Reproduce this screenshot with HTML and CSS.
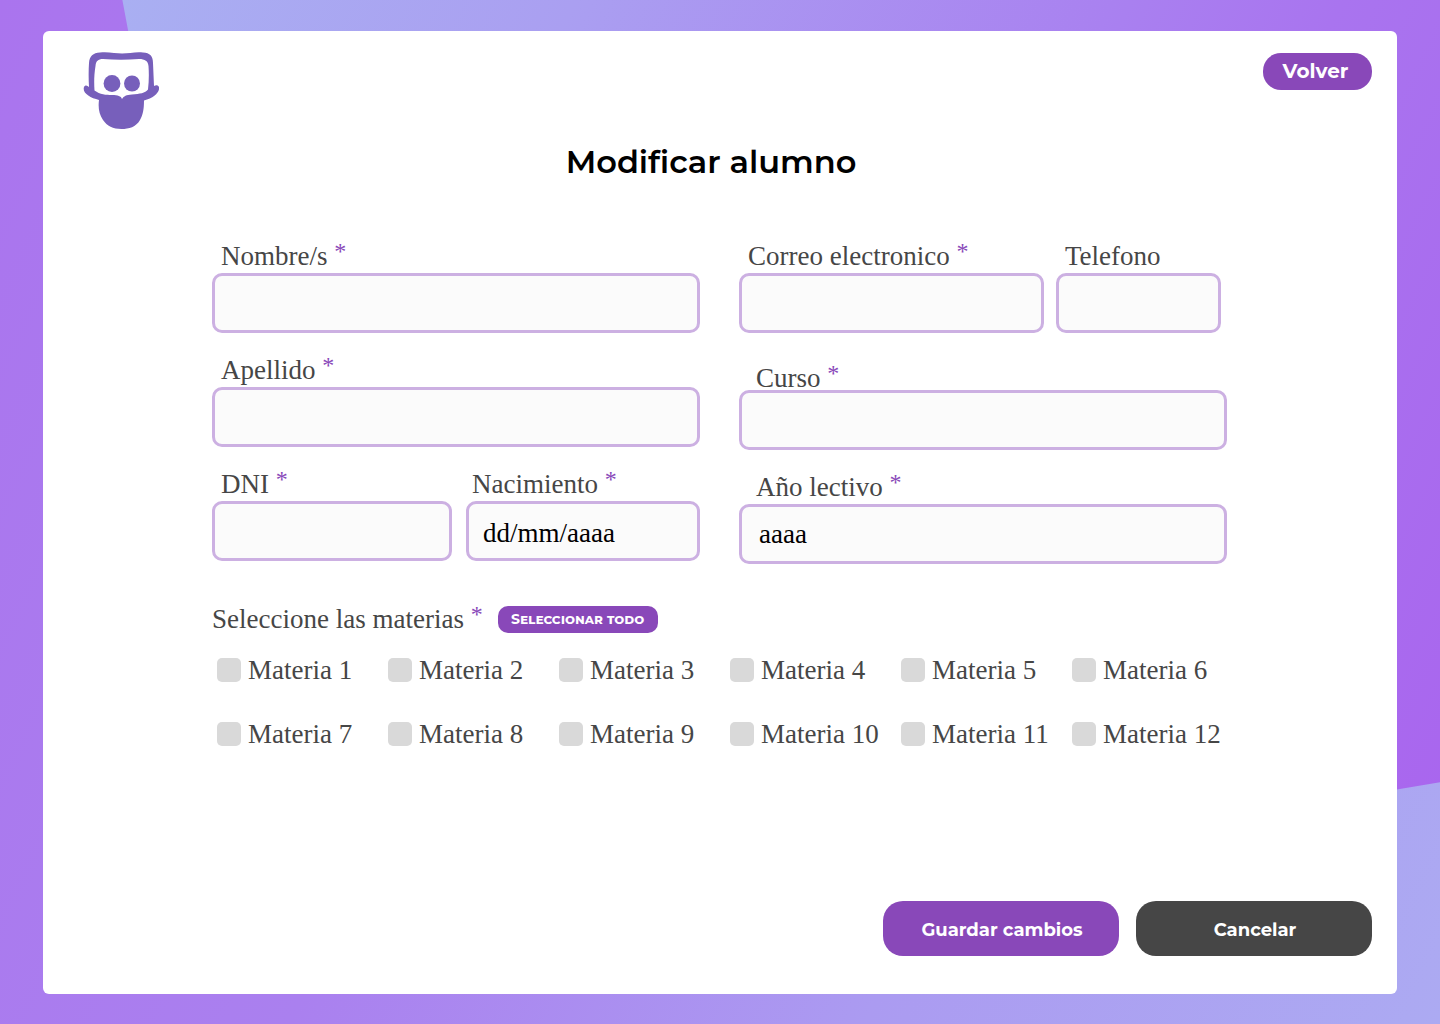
FILE: index.html
```html
<!DOCTYPE html>
<html lang="es">
<head>
<meta charset="utf-8">
<meta name="viewport" content="width=device-width, initial-scale=1">
<title>Modificar alumno</title>
<link rel="stylesheet" href="styles.css">
</head>
<body>
<main class="card">
  <header class="top">
    <svg class="logo" viewBox="0 0 76 80" aria-hidden="true">
      <path fill="#775fbb" fill-rule="evenodd" d="M17 1.500C25 .5 33 2.500 39 2.500C46 2.500 53 .5 60 1.500C67 2 70 5 70 12L71 35C73 34 75 34 76 36C77 41 71 47 61 49.500C61 58 60 64 57 69C53 76 46 78 38.500 78C30 78 24 75 20 69C16 63 15 57 16 49C7 47-1 42 1 36C2 34 4 34 6 36C5.500 28 5.500 19 6 12C6.500 5 10 2 17 1.500ZM20 8C15 8 13 10 12.500 15C11 24 11 32 11.500 39.500C17 43.500 23 44 29 44C35 44 38 45 39 48C41 45 43 44 49 43.500C57 43 62 42 65 38.500C66 30 66 22 65.500 15C65 10 62 8 56 8C44 9 32 9 20 8Z"/>
      <circle cx="29" cy="32.500" r="8.400" fill="#775fbb"/><circle cx="49" cy="32.500" r="8" fill="#775fbb"/>
    </svg>
    <button type="button" class="btn back">Volver</button>
  </header>
  <h1 class="title">Modificar alumno</h1>
  <form class="form">
    <div class="columns">
      <div class="column">
        <div class="field"><label for="nombre">Nombre/s <span class="req">*</span></label><input id="nombre" type="text"></div>
        <div class="field"><label for="apellido">Apellido <span class="req">*</span></label><input id="apellido" type="text"></div>
        <div class="pair pair-dni">
          <div class="field"><label for="dni">DNI <span class="req">*</span></label><input id="dni" type="text"></div>
          <div class="field birth"><label for="nacimiento">Nacimiento <span class="req">*</span></label><input id="nacimiento" type="text" placeholder="dd/mm/aaaa"></div>
        </div>
      </div>
      <div class="column">
        <div class="pair pair-contact">
          <div class="field"><label for="correo">Correo electronico <span class="req">*</span></label><input id="correo" type="email"></div>
          <div class="field"><label for="telefono">Telefono</label><input id="telefono" type="tel"></div>
        </div>
        <div class="field course"><label for="curso">Curso <span class="req">*</span></label><input id="curso" type="text"></div>
        <div class="field year"><label for="anio">Año lectivo <span class="req">*</span></label><input id="anio" type="text" placeholder="aaaa"></div>
      </div>
    </div>
    <div class="subjects-head"><span>Seleccione las materias <span class="req">*</span></span><button type="button" class="btn all">Seleccionar todo</button></div>
    <div class="subjects">
      <label><input type="checkbox">Materia 1</label>
      <label><input type="checkbox">Materia 2</label>
      <label><input type="checkbox">Materia 3</label>
      <label><input type="checkbox">Materia 4</label>
      <label><input type="checkbox">Materia 5</label>
      <label><input type="checkbox">Materia 6</label>
      <label><input type="checkbox">Materia 7</label>
      <label><input type="checkbox">Materia 8</label>
      <label><input type="checkbox">Materia 9</label>
      <label><input type="checkbox">Materia 10</label>
      <label><input type="checkbox">Materia 11</label>
      <label><input type="checkbox">Materia 12</label>
    </div>
    <div class="actions">
      <button type="submit" class="btn action">Guardar cambios</button>
      <button type="button" class="btn action cancel">Cancelar</button>
    </div>
  </form>
</main>
</body>
</html>
```
FILE: styles.css
```css
* { box-sizing: border-box; }
body {
  margin: 0;
  min-height: 100vh;
  padding: 31px 43px 30px;
  display: flex;
  position: relative;
  isolation: isolate;
  font-family: "Liberation Serif", serif;
  font-size: 27px;
  line-height: 32px;
  color: #464646;
  background: linear-gradient(115deg, #aa74ee 0%, #aa80ef 40%, #ab9bf1 70%, #acaaf2 100%);
}
body::before {
  content: "";
  position: absolute;
  inset: 0;
  z-index: -1;
  background: linear-gradient(115deg, #a9b0f2 5%, #aa9ff1 30%, #a980f0 59%, #a974ef 70%, #a963ee 100%);
  clip-path: polygon(8.5% 0, 8.9% 3%, 20% 50%, 60% 80%, 97% 77.1%, 100% 76.4%, 100% 0);
}
.card {
  flex: 1;
  display: flex;
  flex-direction: column;
  padding: 20px 25px 38px 40px;
  background: #fff;
  border-radius: 6px;
}
.top { display: flex; justify-content: space-between; align-items: flex-start; }
.logo { width: 76px; height: 80px; }
.btn {
  border: 0;
  color: #fff;
  background: #8948b9;
  font-family: Montserrat, Inter, sans-serif;
  font-weight: 700;
  cursor: pointer;
}
.back { width: 109px; height: 37px; margin-top: 2px; padding: 0 4px 2px 0; border-radius: 18px; font-size: 20px; }
.title {
  margin: 9px 33px 0 0;
  text-align: center;
  color: #000;
  font: 600 32px/44px Montserrat, Inter, sans-serif;
}
.form { flex: 1; display: flex; flex-direction: column; margin-top: 56px; }
.columns {
  display: grid;
  grid-template-columns: 488fr 488fr;
  gap: 39px;
  margin: 0 145px 0 129px;
}
.column { display: flex; flex-direction: column; gap: 21px; }
.field { display: flex; flex-direction: column; min-width: 0; }
.field label { height: 33px; padding-left: 9px; white-space: nowrap; }
.field input {
  width: 100%;
  height: 60px;
  padding: 0 14px;
  border: 3px solid #ccb0e2;
  border-radius: 10px;
  background: #fbfbfb;
  font: inherit;
  color: #000;
}
.field input::placeholder { color: #000; opacity: 1; }
.req { color: #8948b9; font-size: 24px; line-height: 0; vertical-align: 6px; }
.pair { display: grid; }
.pair-dni { grid-template-columns: 240fr 234fr; gap: 14px; }
.pair-contact { grid-template-columns: 305fr 165fr; gap: 12px; padding-right: 6px; }
.birth label { padding-left: 6px; }
.birth input { padding-top: 4px; }
.course { margin-top: 3px; }
.course label, .year label { padding-left: 17px; }
.course label { padding-top: 5px; }
.year input { padding: 0 17px; }
.subjects-head { display: flex; align-items: center; gap: 15px; margin: 39px 145px 0 129px; }
.all { width: 160px; height: 27px; padding: 0; border-radius: 10px; font-size: 14px; font-variant: small-caps; }
.subjects {
  display: grid;
  grid-template-columns: repeat(6, 1fr);
  row-gap: 32px;
  margin: 19px 129px 0 134px;
}
.subjects label { display: flex; align-items: center; gap: 7px; white-space: nowrap; }
.subjects input {
  appearance: none;
  width: 24px;
  height: 24px;
  margin: 0;
  border-radius: 5px;
  background: #d9d9d9;
}
.subjects input:checked { background: #8948b9; }
.actions { display: flex; justify-content: flex-end; gap: 17px; margin-top: auto; }
.action { width: 236px; height: 55px; padding: 2px 4px 0 6px; border-radius: 20px; font-size: 18px; }
.cancel { background: #464646; }
```
